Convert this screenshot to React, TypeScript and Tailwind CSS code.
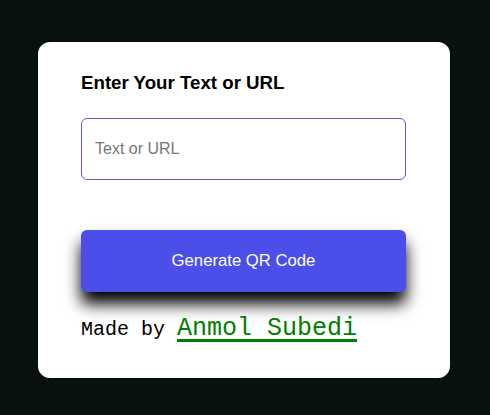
export default function App() {
  return (
    <div className="min-h-screen w-full bg-[#081110] flex justify-center pt-[42px] pr-[2px]" style={{ fontFamily: '"Liberation Sans", Arial, sans-serif' }}>
      <div className="w-[412px] h-[336px] bg-white rounded-[12px] px-[43px] pt-[29px]">
        <h2 className="text-[18.7px] leading-[24px] font-bold text-black">Enter Your Text or URL</h2>
        <input
          type="text"
          placeholder="Text or URL"
          className="mt-[23px] block w-[325px] h-[62px] border border-[#5b5be6] rounded-[6px] px-[13px] text-[16px] text-black placeholder:text-[#777] outline-none"
        />
        <button className="mt-[50px] block w-[325px] h-[62px] bg-[#4b4ee8] text-white text-[16.7px] rounded-[6px] shadow-[0_12px_16px_rgba(0,0,0,1)]">
          Generate QR Code
        </button>
        <div className="mt-[22px] text-black leading-[30px]" style={{ fontFamily: '"Liberation Mono", "Courier New", monospace' }}>
          <span className="text-[20px]">Made by </span>
          <a href="#" className="text-[25px] text-[#008000] underline decoration-[3px] underline-offset-[4px]">Anmol Subedi</a>
        </div>
      </div>
    </div>
  );
}
